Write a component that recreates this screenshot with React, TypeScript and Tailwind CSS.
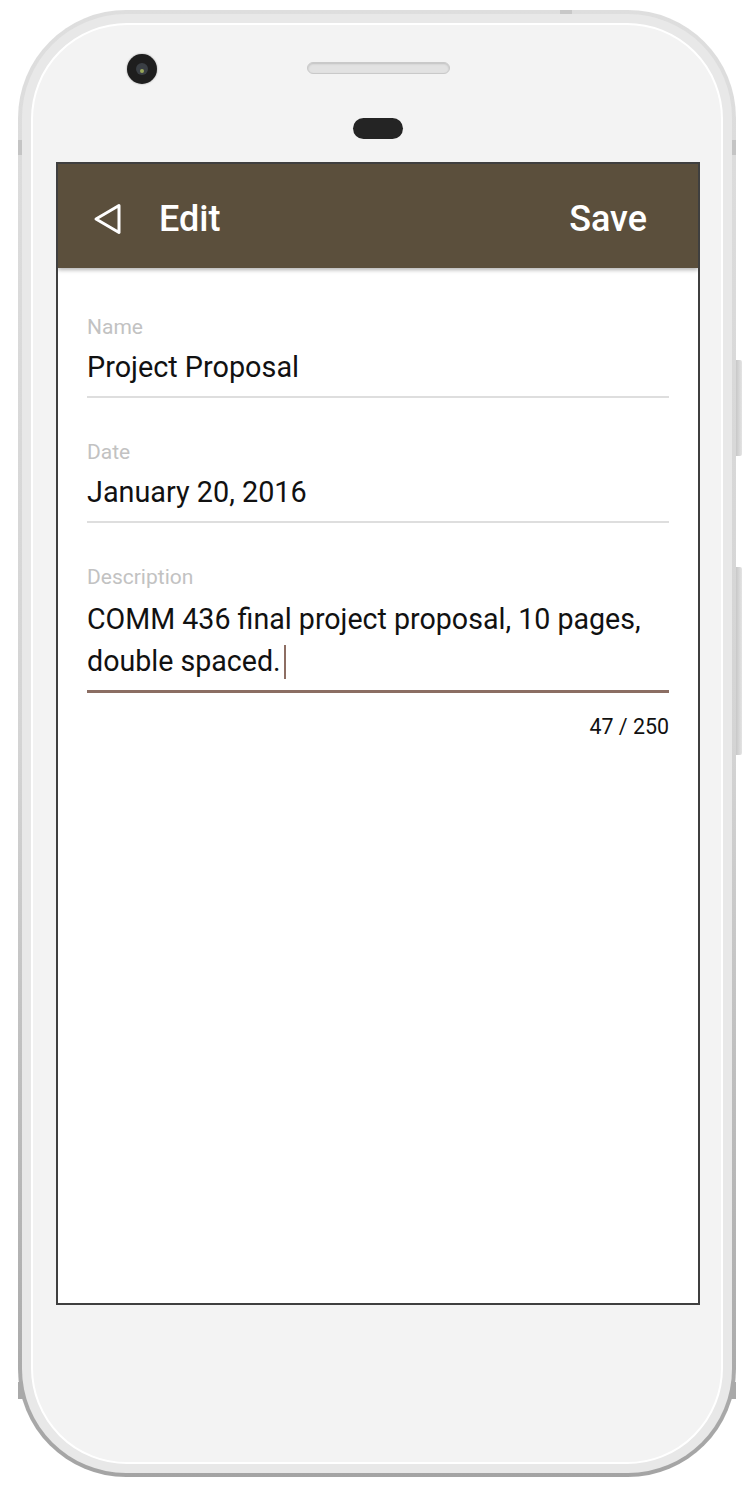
import React from 'react';

const font = { fontFamily: 'Roboto, "Liberation Sans", sans-serif' };

const BackIcon = () => (
  <svg width="32" height="34" viewBox="0 0 32 34" fill="none">
    <path
      d="M27 3.5 L4 17 L27 30.5 Z"
      stroke="white"
      strokeWidth="3"
      strokeLinejoin="round"
    />
  </svg>
);

interface FieldProps {
  label: string;
  value: string;
}

const Field = ({ label, value }: FieldProps) => (
  <div className="flex flex-col">
    <div className="text-[21px] leading-[24px] text-[#c2c2c2]">{label}</div>
    <div className="mt-[8px] text-[28.8px] leading-[40px] text-[#111]">{value}</div>
    <div className="mt-[9px] h-[2px] bg-[#dedede]" />
  </div>
);

export default function App() {
  return (
    <div className="min-h-[1492px] w-[754px] bg-white" style={font}>
      <div className="flex items-start pl-[18px] pt-[10px]">
        {/* phone body */}
        <div className="relative h-[1467px] w-[718px] rounded-[108px] bg-gradient-to-b from-[#dedede] via-[#d4d4d4] to-[#a4a4a4] p-[4px]">
          {/* antenna lines */}
          <div className="absolute left-0 top-[130px] h-[15px] w-[14px] bg-[#c4c4c4]" />
          <div className="absolute right-0 top-[130px] h-[15px] w-[14px] bg-[#c4c4c4]" />
          <div className="absolute left-0 top-[1372px] h-[17px] w-[14px] bg-[#a9a9a9]" />
          <div className="absolute right-0 top-[1372px] h-[17px] w-[14px] bg-[#a9a9a9]" />
          <div className="absolute left-[542px] top-0 h-[13px] w-[12px] bg-[#c8c8c8]" />

          <div className="relative h-full w-full rounded-[104px] bg-[#e8e8e8] p-[9px]">
            <div className="flex h-full w-full flex-col rounded-[96px] border-2 border-white bg-[#f3f3f3] pb-[157px] pl-[23px] pr-[21px]">
              {/* top hardware */}
              <div className="flex h-[137px] flex-col">
                <div className="mt-[29px] grid grid-cols-[1fr_auto_1fr] items-center">
                  <div className="flex">
                    <div className="ml-[71px] flex h-[30px] w-[30px] items-center justify-center rounded-full bg-[#1e1e1e] shadow-[0_0_2px_rgba(0,0,0,0.4)]">
                      <div className="flex h-[12px] w-[12px] items-center justify-center rounded-full bg-[#3a3f44]">
                        <div className="mt-[4px] h-[4px] w-[4px] rounded-full bg-[#9aa95a]" />
                      </div>
                    </div>
                  </div>
                  <div className="mt-[-2px] h-[12px] w-[143px] rounded-full border border-[#c9c9c9] bg-[#e2e2e2] shadow-[inset_0_1px_2px_rgba(0,0,0,0.15)]" />
                  <div />
                </div>
                <div className="mt-[34px] flex justify-center">
                  <div className="h-[21px] w-[50px] rounded-full bg-[#242424]" />
                </div>
              </div>

              {/* screen */}
              <div className="flex flex-1 flex-col overflow-hidden border-2 border-[#3f3f3f] bg-white">
                <div className="relative z-10 flex h-[104px] items-center bg-[#5b4f3c] pl-[34px] pr-[51px] pt-[6px] shadow-[0_2px_4px_rgba(0,0,0,0.3)]">
                  <BackIcon />
                  <div className="ml-[35px] text-[36px] font-medium text-white">Edit</div>
                  <div className="ml-auto text-[36px] font-medium text-white">Save</div>
                </div>

                <div className="flex flex-col gap-[42px] px-[29px] pt-[47px]">
                  <Field label="Name" value="Project Proposal" />
                  <Field label="Date" value="January 20, 2016" />
                  <div className="flex flex-col">
                    <div className="text-[21px] leading-[24px] text-[#c2c2c2]">Description</div>
                    <div className="mt-[9px] text-[28.6px] leading-[42px] text-[#111]">
                      COMM 436 final project proposal, 10 pages, double spaced.
                      <span className="ml-[3px] inline-block h-[34px] w-[2px] align-[-8px] bg-[#8d6e63]" />
                    </div>
                    <div className="mt-[8px] h-[3px] bg-[#8b6e63]" />
                    <div className="mt-[22px] text-right text-[21.4px] leading-[24px] text-[#111]">47 / 250</div>
                  </div>
                </div>
              </div>
            </div>
          </div>
        </div>

        {/* side buttons */}
        <div className="flex flex-col">
          <div className="mt-[350px] h-[96px] w-[6px] rounded-r-[2px] bg-gradient-to-r from-[#c8c8c8] to-[#e4e4e4]" />
          <div className="mt-[111px] h-[188px] w-[6px] rounded-r-[2px] bg-gradient-to-r from-[#c8c8c8] to-[#e4e4e4]" />
        </div>
      </div>
    </div>
  );
}
